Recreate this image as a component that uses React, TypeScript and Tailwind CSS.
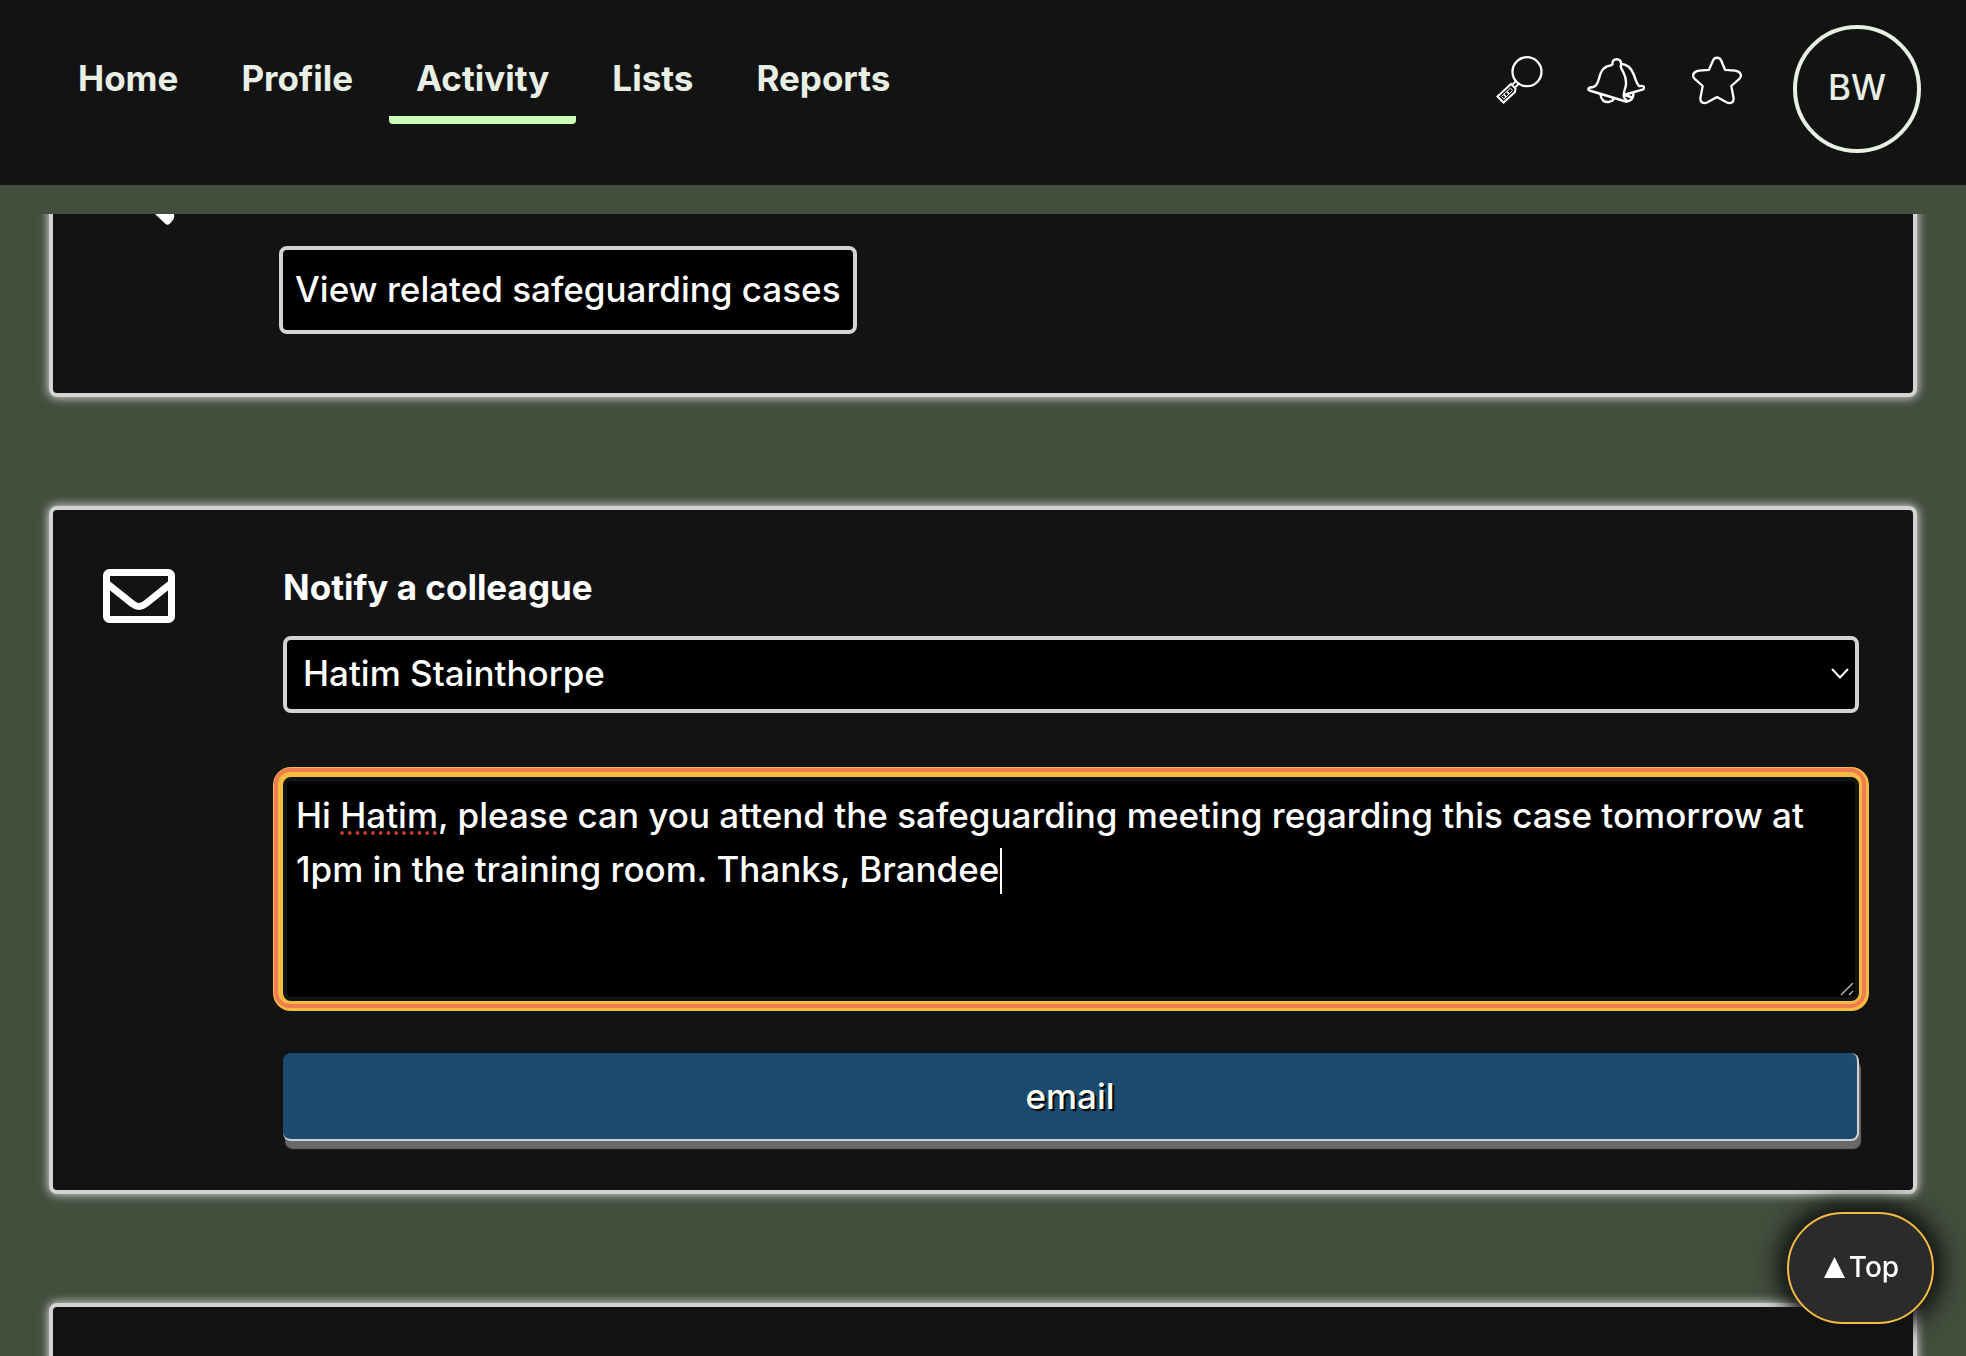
import React from "react";

const links = ["Home", "Profile", "Activity", "Lists", "Reports"];

const card =
  "rounded-lg border-4 border-[#d3d3d3] bg-[#131313] shadow-[0_0_10px_1px_#d3d3d3]";

function SearchIcon() {
  return (
    <svg width="48" height="48" viewBox="0 0 48 48" fill="none" stroke="#fff" strokeWidth="2.300" aria-hidden="true">
      <circle cx="31" cy="15.700" r="14.500" />
      <path d="M20.500 24.500 16.500 28.500M23.500 27 19 31.500" strokeWidth="1.800" />
      <path d="M15 28 19.500 32.500 19 36 7.500 46.500 1.500 40.500Z" strokeWidth="2" />
      <path d="M5.500 40.500 14.500 32 16.500 34.500 8 43Z" strokeWidth="1" />
      <path d="M8 38.500 10 41M11 35.500 13 38" strokeWidth="1.600" />
    </svg>
  );
}

function BellIcon() {
  return (
    <svg width="58" height="48" viewBox="0 0 58 48" fill="none" stroke="#fff" strokeWidth="2.400" strokeLinejoin="round" strokeLinecap="round" aria-hidden="true">
      <path d="M25.500 7.500C25 4 27 2.300 29.500 2.300 33 2.300 34.500 4.500 34 8 33 10 34 11.500 36 14.500 39 20 40 24 38.500 30 37 35.500 35.500 38.500 37.500 41 41 44.500 40 45 37 44L2.500 33.500C.8 33 1 31 3 30.500 9 30.500 10.500 27 12 21.500 13.500 15 15.500 10 23.500 8.500Z" />
      <path d="M34.500 7C41 7.500 44.500 12 46.500 17 49 23 50 28 52.500 29.200 57.500 28 58.500 31 55.500 32.700L38.500 37.500" />
      <path d="M13.500 37.500C14 43 17.500 45.500 21.500 45 25 44.500 26.500 43 27.500 41" />
      <path d="M46.500 36C46.500 41 44 44.500 39 44.500M37.500 38 44 40" />
    </svg>
  );
}

function StarIcon() {
  return (
    <svg width="50" height="50" viewBox="0 0 50 50" fill="none" stroke="#fff" strokeWidth="2.300" strokeLinejoin="round" aria-hidden="true">
      <path d="M21 4.500C22.500.8 27.500.8 29.200 4.500L33 13.800 43 14.600C49 15.300 50.500 20 47 23.200L39.300 30 41.500 41.500C42.300 46.500 38.500 48.300 34.500 46.300L25 41 15.500 46.300C11.500 48.300 7.700 46.500 8.500 41.500L10.700 30 3 23.200C-.5 20 1 15.300 7 14.600L17 13.800Z" />
    </svg>
  );
}

function EnvelopeIcon() {
  return (
    <svg width="72" height="54" viewBox="0 0 72 54" fill="none" stroke="#fff" strokeWidth="7" aria-hidden="true">
      <rect x="3.500" y="3.500" width="65" height="47" rx="3" />
      <path d="M4 14.500 29 34.500C34 38.500 38 38.500 43 34.500L68 14.500" />
    </svg>
  );
}

function Header() {
  return (
    <header className="flex h-[185px] items-start justify-between bg-[#131313] pl-[51px] pr-[45px] text-[#e8efe4]">
      <nav className="flex gap-[9px] pt-[51px]">
        {links.map((name) => (
          <a
            key={name}
            href="#"
            aria-current={name === "Activity" ? "page" : undefined}
            className={
              name === "Activity"
                ? "rounded-b border-b-8 border-[#ccffb9] px-[27px] pb-[11px] text-[35px] leading-[54px] font-bold"
                : "px-[27px] text-[35px] leading-[54px] font-bold"
            }
          >
            {name}
          </a>
        ))}
      </nav>
      <div className="flex items-start">
        <button type="button" aria-label="Search" className="mt-[56px] mr-[43px]">
          <SearchIcon />
        </button>
        <button type="button" aria-label="Notifications" className="mt-[57px] mr-[47px]">
          <BellIcon />
        </button>
        <button type="button" aria-label="Favourites" className="mt-[56px] mr-[51px]">
          <StarIcon />
        </button>
        <button
          type="button"
          aria-label="Account BW"
          className="mt-[25px] size-32 rounded-full border-4 border-[#e8efe4] pb-1 text-[35px] font-medium"
        >
          BW
        </button>
      </div>
    </header>
  );
}

export default function App() {
  return (
    <div className="flex h-screen flex-col overflow-hidden bg-[#434e3d] font-['Inter',sans-serif] text-white">
      <Header />
      <main className="mt-[29px] flex min-h-0 flex-1 flex-col gap-[109px] overflow-hidden px-[49px]">
        <section className={`${card} relative -mt-5 h-[203px] shrink-0 pt-[48px] pl-[226px]`}>
          <svg className="absolute top-[10px] left-[102px]" width="20" height="18" viewBox="0 0 20 18" fill="#fff" aria-hidden="true">
            <path d="M-2 4 10 15.500Q12.500 18 15 15.500L18 12Q20.500 8 18 4Z" />
          </svg>
          <button type="button" className="h-[88px] rounded-lg border-4 border-[#d3d3d3] bg-black px-3 pb-[2px] text-[35px] font-medium">
            View related safeguarding cases
          </button>
        </section>

        <section className={`${card} flex h-[688px] shrink-0 items-start pt-[50px] pr-[54px] pl-[50px]`}>
          <div className="mt-[9px] w-[180px] shrink-0">
            <EnvelopeIcon />
          </div>
          <form className="flex min-w-0 flex-1 flex-col" onSubmit={(e) => e.preventDefault()}>
            <label htmlFor="colleague" className="text-[35px] leading-[54px] font-bold">
              Notify a colleague
            </label>
            <div className="relative mt-[22px]">
              <select
                id="colleague"
                className="h-[77px] w-full appearance-none rounded-lg border-4 border-[#d3d3d3] bg-black px-4 pb-[2px] text-[35px] font-medium"
              >
                <option>Hatim Stainthorpe</option>
              </select>
              <svg className="pointer-events-none absolute top-[32px] right-[10px]" width="18" height="12" viewBox="0 0 18 12" fill="none" stroke="#fff" strokeWidth="2" strokeLinecap="round" aria-hidden="true">
                <path d="m1.500 1.500 7.500 8 7.500-8" />
              </svg>
            </div>
            <div className="relative mt-16 h-[224px]">
              <textarea
                aria-label="Message"
                spellCheck={false}
                className="block h-full w-full resize-none overflow-hidden rounded-lg border-4 border-[#131313] bg-black px-[9px] py-[7px] text-[35px] leading-[54px] font-medium shadow-[-1px_-1px_0_4px_#f5bc42,-1px_-1px_0_8px_#f07c50,0_0_0_10px_#f5bc42] outline-none"
                defaultValue="Hi Hatim, please can you attend the safeguarding meeting regarding this case tomorrow at 1pm in the training room. Thanks, Brandee"
              />
              <span className="pointer-events-none absolute top-[54px] left-[57px] w-[97px] border-b-4 border-dotted border-[#c23a2e]" />
              <span className="pointer-events-none absolute top-[71px] left-[717px] h-[46px] w-[2px] bg-white" />
              <svg className="pointer-events-none absolute right-[5px] bottom-[5px]" width="14" height="14" viewBox="0 0 14 14" stroke="#b0b0b0" strokeWidth="1.500" aria-hidden="true">
                <path d="M1 13 13 1M9 13l4-4" />
              </svg>
            </div>
            <button
              type="submit"
              className="mt-[52px] h-[88px] rounded-lg border-r-2 border-b-2 border-[#d3d3d3] bg-[#1d4b6f] text-[35px] font-medium text-[#fffff4] shadow-[2px_8px_1px_0_#696969] [text-shadow:2px_2px_1px_#000]"
            >
              email
            </button>
          </form>
        </section>

        <section className={`${card} h-[400px] shrink-0`} />
      </main>
      <a
        href="#"
        className="fixed right-[32px] bottom-[32px] flex h-[112px] w-[147px] items-center justify-center gap-1 rounded-[56px] border-2 border-[#f5bc42] bg-[#2b2b2b] pb-[2px] pl-[2px] text-[28px] font-medium shadow-[0_0_22px_10px_#131313]"
      >
        <svg width="21" height="21" viewBox="0 0 21 21" fill="#fff" aria-hidden="true">
          <path d="M10.500 0 21 21H0Z" />
        </svg>
        Top
      </a>
    </div>
  );
}
